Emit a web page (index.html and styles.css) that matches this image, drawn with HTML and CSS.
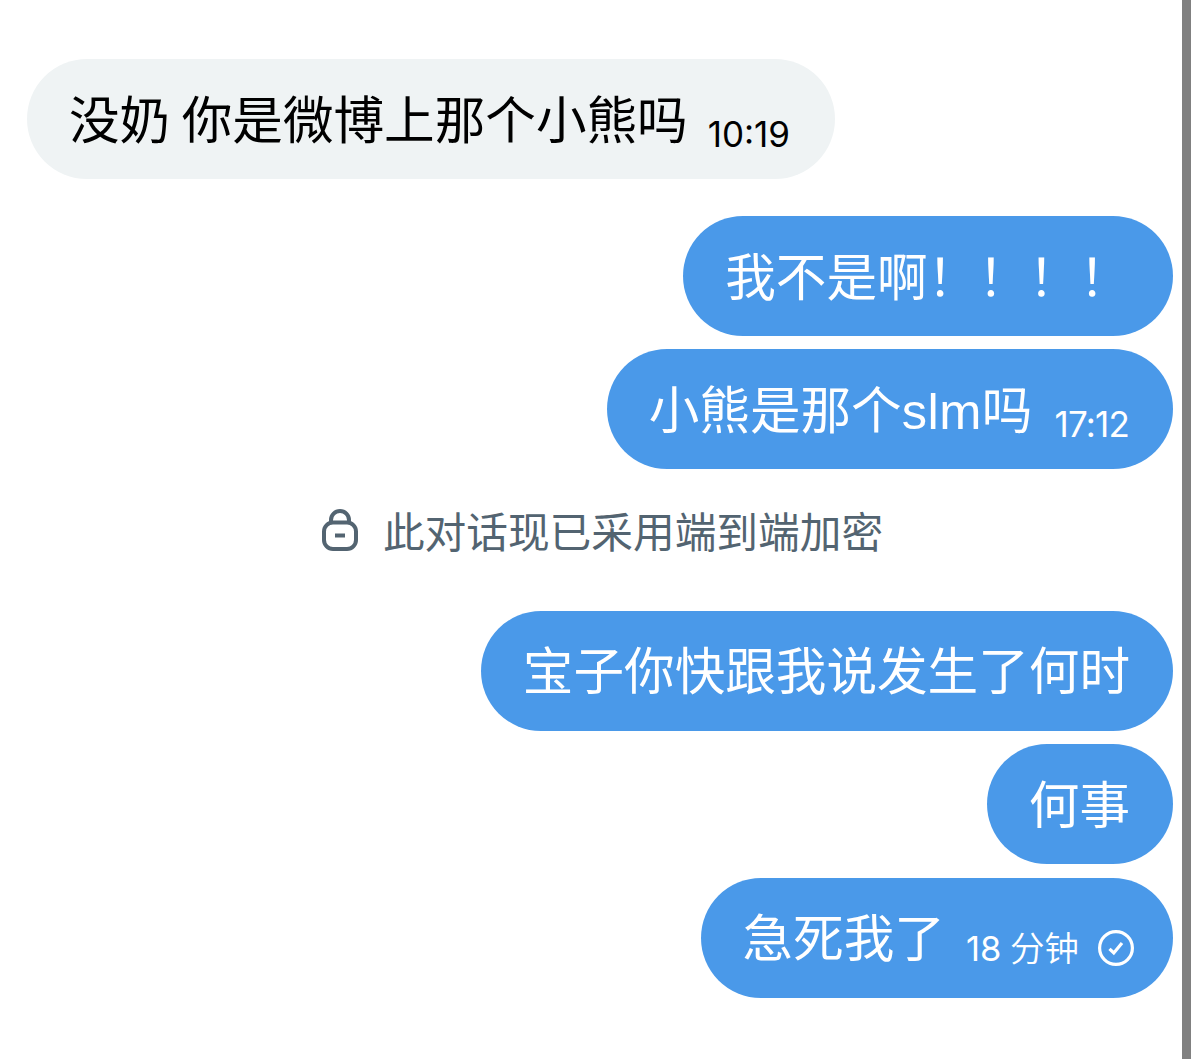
FILE: index.html
```html
<!DOCTYPE html>
<html lang="zh-CN">
<head>
    <meta charset="UTF-8">
    <meta name="viewport" content="width=device-width, initial-scale=1.0">
    <title>Messages</title>
    <link rel="stylesheet" href="styles.css">
</head>
<body>
    <main class="chat">
        <div class="message received">
            <span class="text">没奶 你是微博上那个小熊吗</span>
            <span class="time">10:19</span>
        </div>
        <div class="group">
            <div class="message sent">
                <span class="text">我不是啊！！！！</span>
            </div>
            <div class="message sent">
                <span class="text">小熊是那个<span class="latin">slm</span>吗</span>
                <span class="time narrow">17:12</span>
            </div>
        </div>
        <div class="notice">
            <svg class="lock" viewBox="0 0 38 44" fill="none" stroke="currentColor" stroke-width="4">
                <path d="M10 14.5V12a9 9 0 0 1 18 0v2.500"/>
                <rect x="3" y="14.500" width="32" height="26.500" rx="9"/>
                <path d="M14 27.500h10"/>
            </svg>
            <span class="notice-text">此对话现已采用端到端加密</span>
        </div>
        <div class="group">
            <div class="message sent">
                <span class="text">宝子你快跟我说发生了何时</span>
            </div>
            <div class="message sent">
                <span class="text">何事</span>
            </div>
            <div class="message sent last">
                <span class="text">急死我了</span>
                <span class="time">18 <span class="unit">分钟</span></span>
                <svg class="check" viewBox="0 0 38 38" fill="none" stroke="currentColor" stroke-width="3.200">
                    <circle cx="19" cy="19" r="16.400"/>
                    <path d="M12.500 19.800l4.300 4.200 8.200-10"/>
                </svg>
            </div>
        </div>
    </main>
</body>
</html>
```

FILE: styles.css
```css
body {
    margin: 0;
    background-color: #ffffff;
    font-family: Inter, "Noto Sans CJK SC", sans-serif;
}

.chat {
    box-sizing: border-box;
    width: 1191px;
    height: 1059px;
    padding: 59px 9px 0 27px;
    border-right: 9px solid #808080;
    display: flex;
    flex-direction: column;
}

.group {
    display: flex;
    flex-direction: column;
    align-items: flex-end;
    gap: 13.4px;
}

.message {
    box-sizing: border-box;
    height: 120px;
    padding: 0 43px 0 42px;
    border-radius: 60px;
    display: flex;
    align-items: center;
    white-space: nowrap;
}

.received {
    align-self: flex-start;
    margin-bottom: 37px;
    background-color: #eff3f4;
    color: #000000;
}

.received .time {
    margin-left: 20px;
    margin-right: 2px;
}

.sent {
    background-color: #4a99e9;
    color: #ffffff;
}

.last {
    padding-right: 38px;
}

.text {
    font-family: "Liberation Sans", "Noto Sans CJK SC", sans-serif;
    font-size: 50.6px;
    line-height: 60px;
    word-spacing: -2.5px;
    margin-top: 5px;
}

.latin {
    letter-spacing: 0.5px;
}

.time {
    font-size: 35px;
    line-height: 40px;
    font-weight: 400;
    margin: 29px 0 0 22px;
}

.narrow {
    letter-spacing: -0.8px;
    margin-right: 1px;
}

.last .time {
    margin: 23px 0 0 21px;
    font-size: 34.5px;
    word-spacing: -1px;
}

/* thinner strokes beside the digits */
.unit {
    font-weight: 350;
}

.notice {
    height: 121.6px;
    padding: 0 0 20px 4px;
    display: flex;
    align-items: center;
    justify-content: center;
    gap: 24px;
    font-size: 41.7px;
    line-height: 60px;
    color: #536471;
}

.notice-text {
    margin-top: 5px;
}

.lock {
    width: 38px;
    height: 44px;
}

.check {
    width: 38px;
    height: 38px;
    margin: 21px 0 0 18px;
}
```
